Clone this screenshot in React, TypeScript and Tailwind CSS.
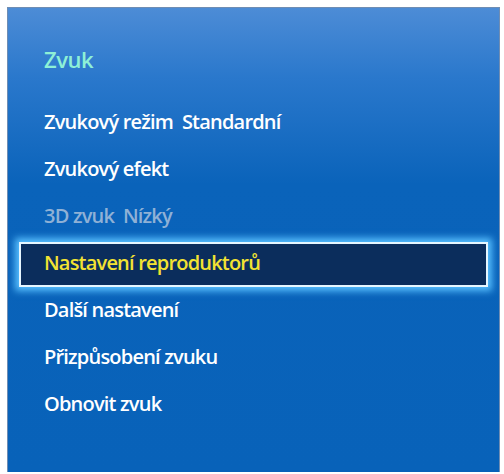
import React from "react";

const items: { label: string; state?: "disabled" | "selected" }[] = [
  { label: "Zvukový režim\u00a0\u00a0Standardní" },
  { label: "Zvukový efekt" },
  { label: "3D zvuk\u00a0\u00a0Nízký", state: "disabled" },
  { label: "Nastavení reproduktorů", state: "selected" },
  { label: "Další nastavení" },
  { label: "Přizpůsobení zvuku" },
  { label: "Obnovit zvuk" },
];

export default function App() {
  return (
    <div className="w-[504px] h-[474px] bg-white pt-[7px] pl-[7px] overflow-hidden" style={{ fontFamily: '"Open Sans", "Noto Sans", sans-serif' }}>
      <div className="w-[493px] h-[465px] border-t border-l border-r border-[#6f8db3] bg-[linear-gradient(180deg,#4d8cd6_0%,#2a78cc_15%,#0a63ba_38%,#0862b9_100%)] flex flex-col">
        <div className="h-[92px] pl-[36px] pt-[40px]">
          <span className="text-[22px] font-semibold text-[#8ef0d6] leading-none tracking-[-0.5px]">Zvuk</span>
        </div>
        <div className="flex flex-col">
          {items.map((it) => {
            if (it.state === "selected") {
              return (
                <div key={it.label} className="h-[47px] px-[11px] flex items-center">
                  <div className="w-full h-[45px] border-2 border-[#e6f6ff] bg-[#0b2d5c] shadow-[0_0_7px_4px_#58c0ff] flex items-center pl-[23px]">
                    <span className="text-[20px] font-semibold text-[#f2e232] tracking-[-0.8px] leading-none -mt-[3px]">{it.label}</span>
                  </div>
                </div>
              );
            }
            return (
              <div key={it.label} className="h-[47px] pl-[36px] flex items-center">
                <span className={`text-[20px] font-semibold tracking-[-0.8px] leading-none -mt-[3px] ${it.state === "disabled" ? "text-[#8fb1d6]" : "text-white"}`}>{it.label}</span>
              </div>
            );
          })}
        </div>
      </div>
    </div>
  );
}
